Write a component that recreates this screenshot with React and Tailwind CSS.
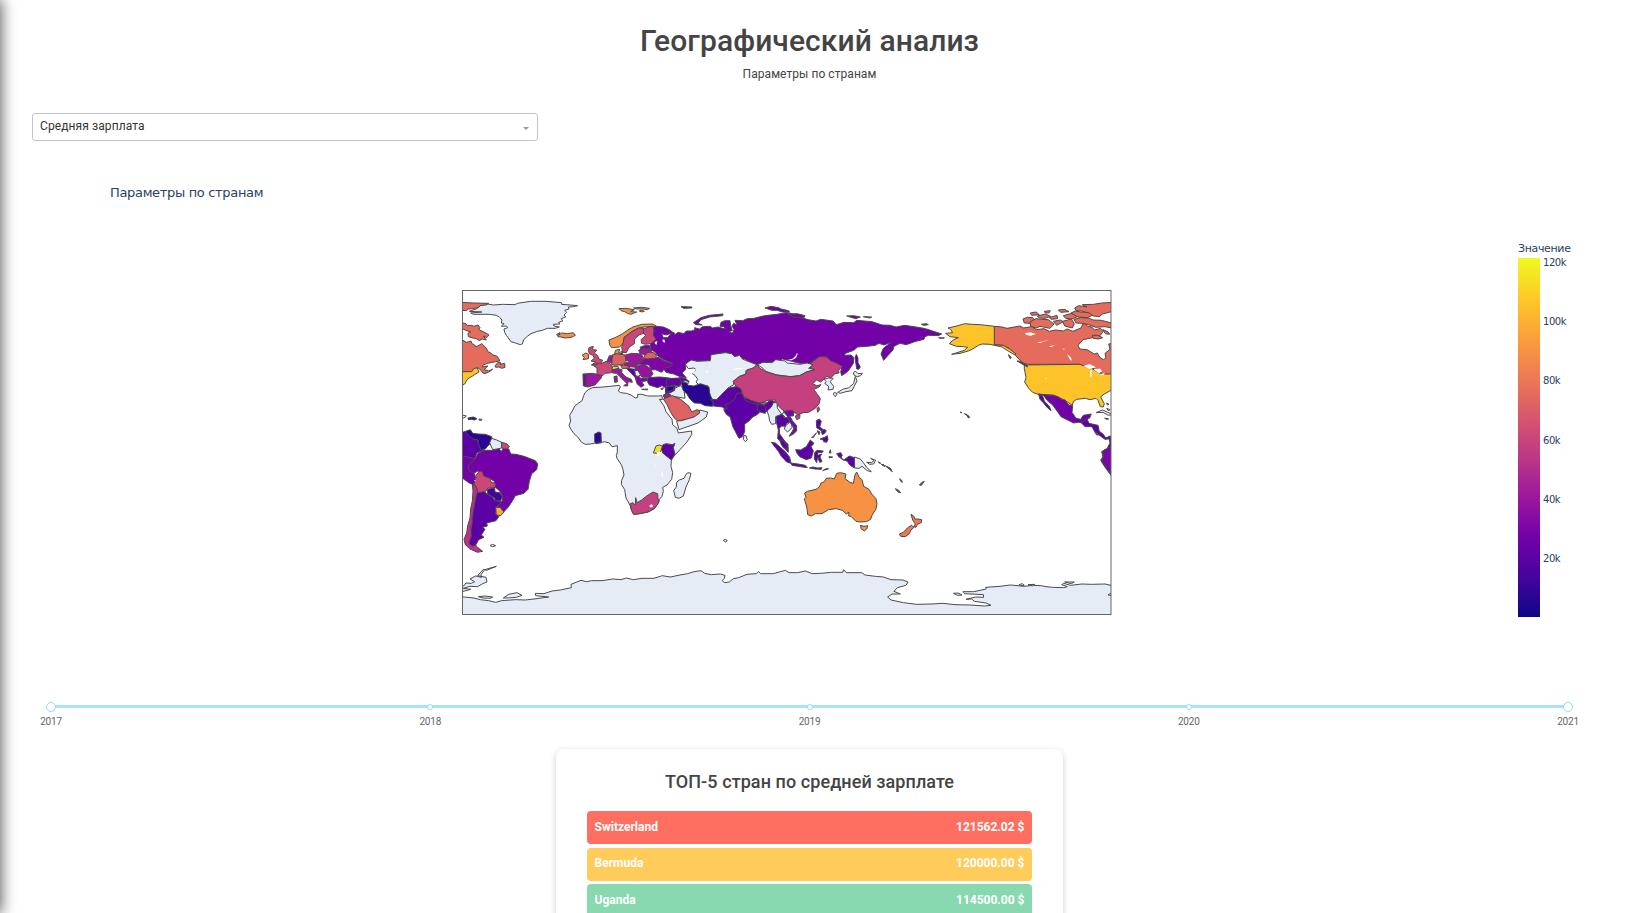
import React from "react";

const NONE = "#e5ecf6";
const RUS = "#7201a8";
const IND = "#5c01a6";
const NAVY = "#2a0593";
const CAN = "#e56b5d";
const USA = "#fdc328";
const PINK = "#c5407e";
const NOR = "#f79143";
const MAG = "#9c179e";
const ROSE = "#cc4778";

// Each layer holds [fill, outline] pairs drawn on its own local origin (x, y in thirds of a pixel).
const layers = [
  {
    at: "translate(0 0)",
    shapes: [
      [NONE, "28,79 50,71 58,65 55,60 82,57 100,60 128,58 165,59 172,55 212,49 258,49 305,53 305,58 330,60 353,62 340,65 325,66 327,72 314,76 320,82 312,90 317,96 304,101 308,108 296,112 300,117 280,118 282,123 298,126 286,130 262,130 247,136 232,139 213,146 202,154 191,164 187,177 181,179 166,174 153,170 145,159 139,151 134,142 132,132 143,128 139,123 124,124 132,116 124,114 126,105 119,97 109,91 88,88 40,88 32,84 66,81"],
      [NOR, "290,148 300,143 295,151 305,144 322,146 340,143 346,151 334,157 316,159 302,156 294,155"],
      [NOR, "477,71 497,70 523,74 512,80 530,81 513,88 502,85 494,80 483,77"],
      [NOR, "521,69 545,67 569,70 562,74 548,72 530,72"],
      [NOR, "538,78 546,75 553,79 546,81"],
      [CAN, "4,52 40,54 86,55 78,60 60,62 56,67 40,71 24,72 20,77 4,76"],
      [CAN, "4,113 18,116 22,122 35,121 42,124 54,120 60,128 56,134 72,141 87,150 80,158 70,153 79,165 67,162 58,167 49,161 36,158 25,155 24,145 32,140 20,137 4,130"],
      [CAN, "-10,165 9,166 20,172 33,168 35,175 44,180 48,186 65,176 70,180 79,190 84,200 94,205 98,210 110,213 117,222 119,228 102,231 83,235 69,240 66,246 84,243 72,254 81,256 86,258 98,252 92,258 75,266 69,264 63,256 54,248 46,252 35,260 18,260 4,262 -10,262"],
      [CAN, "105,243 114,232 122,233 120,238 134,235 135,247 126,250 116,246 107,247"],
      [USA, "-10,262 18,260 35,260 42,250 52,249 57,261 45,268 38,273 24,281 18,290 15,296 7,301 -10,310"],
      [NONE, "7,390 19,393 12,399 4,399"],
      [NAVY, "24,399 40,396 51,401 43,405 35,403 25,404"],
      [NONE, "57,402 66,403 65,406 58,406"],
      [NONE, "385,314 398,308 430,306 478,301 481,306 475,318 482,323 499,325 513,330 526,339 533,337 533,328 545,328 563,333 595,333 606,332 607,344 598,343 612,363 618,380 636,403 638,419 651,430 655,444 695,438 695,449 680,472 660,494 643,512 634,525 633,544 638,563 635,583 621,600 608,607 610,619 606,634 598,643 594,655 583,671 564,681 533,687 521,688 515,677 510,660 498,639 494,614 484,598 485,586 492,570 489,554 485,541 471,520 469,512 472,501 472,482 456,485 448,474 433,470 418,475 405,474 392,477 376,478 365,472 353,456 342,446 333,433 327,421 332,408 329,391 337,378 345,362 366,347 371,332 375,323"],
      [NAVY, "404,447 416,441 423,444 424,471 408,476 404,470"],
      ["#f0dd26", "580,504 588,483 598,480 608,484 603,497 599,505"],
      [IND, "608,480 618,476 637,479 645,475 640,488 645,507 634,525 608,504 605,493"],
      [PINK, "510,657 518,653 526,660 527,638 531,653 545,645 560,633 579,621 593,626 594,641 598,648 594,656 583,671 564,681 533,687 521,688 515,677"],
      [NONE, "693,565 688,584 678,606 670,633 657,640 646,637 641,617 649,606 650,592 658,585 672,580 678,568 684,563"],
      // Western Europe
      [ROSE, "387,188 400,184 397,194 410,195 403,204 413,212 417,222 428,226 421,236 394,240 408,231 393,228 403,220 399,211 388,206 385,196"],
      [NOR, "366,211 377,204 386,208 385,221 369,224 373,217"],
      [NOR, "447,165 465,158 485,148 502,136 519,126 545,118 579,117 590,124 576,125 553,126 534,130 515,140 504,148 492,157 490,174 479,186 455,188 449,180"],
      [ROSE, "485,187 490,171 493,157 514,141 535,129 552,130 553,144 537,150 524,162 523,176 507,187 499,203 488,202"],
      [ROSE, "556,130 565,126 579,124 582,137 580,150 588,163 575,175 557,178 545,175 543,164 558,151 551,146 550,133"],
      [NOR, "466,196 479,193 476,202 486,206 472,209 464,207"],
      [NOR, "482,200 490,200 487,207"],
      [MAG, "369,267 397,265 425,271 423,280 405,300 383,306 370,302"],
      ["#8405a7", "370,268 381,270 379,304 371,302"],
      [ROSE, "396,239 410,240 411,234 423,236 439,229 455,240 458,250 455,263 435,265 428,272 411,268 411,249"],
      ["#de6164", "455,220 456,210 471,206 495,210 498,229 489,239 463,241 455,238"],
      [MAG, "441,229 448,212 457,213 455,234"],
      ["#de6164", "482,241 508,240 509,249 487,251"],
      ["#eadb32", "455,251 460,244 474,244 476,251 461,254"],
      [MAG, "457,254 475,251 486,254 485,263 498,276 514,283 517,292 504,290 503,303 491,302 501,296 487,282 470,265 457,264"],
      [MAG, "462,275 471,273 472,291 464,292"],
      [MAG, "496,210 515,205 545,207 551,227 537,237 515,231 498,226"],
      ["#8405a7", "540,187 553,182 568,181 571,192 560,192 545,196"],
      [MAG, "536,196 547,190 574,193 574,205 556,209 540,205"],
      [MAG, "491,236 508,230 535,236 528,247 508,245 494,240"],
      ["#6300a7", "500,250 528,253 526,265 535,278 525,277 507,258"],
      ["#9613a1", "527,245 551,237 570,250 579,266 572,276 548,277 536,268 525,255"],
      [NONE, "524,256 534,256 541,269 533,277 526,269"],
      ["#8405a7", "525,276 536,273 542,280 562,279 562,287 545,290 552,301 543,307 531,296"],
      [NONE, "545,313 563,312 562,315"],
      ["#8405a7", "535,237 552,225 552,218 584,220 594,217 614,228 640,237 639,246 611,254 605,262 586,254 574,255 567,240"],
      [IND, "564,278 581,277 599,276 620,278 645,282 661,280 658,293 657,303 629,305 615,307 606,302 593,308 568,300 563,292"],
      [NONE, "602,311 611,308 606,315"],
      [NONE, "610,330 628,324 644,310 661,302 672,312 675,340 640,334 617,345"],
      [NAVY, "616,306 645,305 644,316 631,323 617,325"],
      ["#9c179e", "611,333 619,324 633,330 624,337 615,345"],
      ["#de6164", "610,342 625,336 637,332 662,343 687,364 695,381 711,374 720,377 717,393 697,400 663,406 657,411 642,398 631,380 620,357"],
      [NONE, "650,408 665,407 702,396 718,385 719,375 743,381 739,396 714,414 691,422 657,434"],
    ],
  },
  {
    at: "translate(630 0)",
    shapes: [
      [RUS, "-50,128 -42,124 -20,126 -2,134 10,143 -12,150 -25,146 -20,158 -7,158 5,143 12,142 14,149 25,142 41,146 49,138 65,138 75,134 74,128 88,132 98,125 120,124 128,129 144,126 166,132 162,125 150,124 153,112 164,107 180,107 182,122 187,137 176,140 187,145 192,134 186,123 191,115 201,120 195,106 218,107 232,101 252,100 284,92 321,88 349,83 379,90 370,96 390,96 414,104 438,108 452,103 489,108 499,119 522,112 551,113 560,106 606,110 636,120 661,121 678,126 704,121 732,125 756,129 773,133 790,139 815,147 805,152 776,151 765,155 762,163 734,170 709,179 690,175 672,184 669,195 656,209 641,226 633,207 640,190 653,180 664,172 642,180 627,175 616,181 592,184 563,186 551,196 527,205 522,211 543,210 551,217 550,235 534,259 515,272 512,260 516,246 496,233 480,227 469,215 450,215 420,235 389,235 337,222 327,230 278,232 261,239 239,231 224,222 217,222 209,211 194,215 185,206 166,203 123,209 121,227 81,229 64,225 46,238 47,254 36,264 49,278 30,275 11,267 -12,262 -20,250 3,244 8,235 -15,226 -36,214 -45,201 -57,194 -59,178 -42,163 -50,150 -48,137"],
      ["#de6164", "-77,212 -66,202 -49,202 -40,213 -46,220 -69,222 -79,220"],
      [RUS, "70,113 93,98 117,91 159,87 158,92 119,96 93,104 84,115 97,120 78,119"],
      [RUS, "285,69 303,64 326,68 333,72 356,77 359,82 337,81 321,76 306,76"],
      [RUS, "352,87 382,86 405,92 402,98 372,97"],
      [RUS, "530,93 551,92 571,96 557,101"],
      ["#333", "33,65 66,66 65,69 41,70"],
      ["#555", "580,95 605,96 599,99"],
      [IND, "559,208 564,219 564,233 571,246 566,253 560,252 558,237 555,219"],
      [NONE, "46,238 56,230 64,225 81,229 121,227 123,209 166,203 185,206 194,215 209,211 217,222 239,231 261,239 244,253 228,256 227,267 208,274 192,288 190,300 175,308 161,325 151,333 140,345 123,342 117,316 113,302 85,298 78,291 83,283 75,271 66,265 78,254 72,249 55,251"],
      ["#6500a7", "-10,282 8,280 27,279 37,292 28,303 8,300 -2,305 -10,303"],
      [NAVY, "-12,306 -2,305 13,302 10,315 -6,321"],
      [IND, "28,276 48,281 58,290 47,292 34,291"],
      [NONE, "40,286 55,289 54,297 44,294"],
      [NAVY, "34,291 49,293 55,301 71,303 92,296 117,306 119,326 130,351 128,364 105,362 91,355 73,354 59,341 51,328 39,315 36,303"],
      [IND, "121,344 140,344 153,331 162,321 175,309 204,304 219,318 208,330 203,342 194,354 188,367 181,374 167,374 157,366 130,363 130,351"],
      [IND, "165,360 181,353 194,342 200,325 215,324 225,342 254,352 282,360 302,345 314,351 306,364 295,379 286,379 278,371 269,382 261,389 248,396 237,408 224,417 224,440 217,455 207,460 200,447 188,424 181,397 169,388 161,374 172,371"],
      [IND, "225,337 240,343 273,351 273,359 245,354 227,347"],
      ["#c9b7df", "274,353 288,351 289,356 277,357"],
      [IND, "261,357 281,360 288,367 286,385 273,382 263,376"],
      [NONE, "220,452 228,452 232,464 226,470 220,463"],
      [NONE, "262,239 279,232 307,233 317,224 345,228 352,234 389,238 411,234 430,239 416,250 435,254 409,261 389,272 361,275 321,270 289,260 276,248"],
      [PINK, "261,239 270,250 286,259 319,270 362,275 389,272 409,261 435,254 419,248 429,239 420,235 441,221 447,215 470,216 481,227 499,234 517,244 506,256 507,264 495,266 482,279 471,274 452,291 440,285 428,296 440,302 453,299 446,307 431,313 443,329 451,341 448,354 437,369 416,382 400,383 383,390 375,383 361,376 345,380 333,371 325,362 312,354 316,345 294,346 270,354 242,346 221,335 212,311 198,304 189,289 208,275 227,268 233,254 252,248"],
      [PINK, "376,393 390,389 389,400 380,404"],
      [PINK, "441,371 446,365 449,374 443,382"],
      [NONE, "462,283 475,279 490,280 480,290 491,304 489,313 474,315 476,304 464,295 469,290"],
      [NONE, "550,264 556,258 564,266 577,265 572,272 562,275 553,271"],
      [NONE, "556,274 561,288 552,305 546,317 528,320 511,325 503,322 520,312 535,309 551,296"],
      [NONE, "493,322 502,326 496,335 490,328"],
      [NONE, "291,378 304,366 310,353 321,353 322,369 335,388 317,395 317,416 305,418 299,408 296,391"],
      [NONE, "337,388 342,379 353,387 365,402 366,428 353,441 343,432 346,423 360,411"],
      [IND, "318,395 337,388 343,398 356,398 362,408 349,416 346,424 335,423 328,430 329,447 344,468 354,478 355,502 344,490 333,472 323,461 325,435 319,410"],
      ["#700aa5", "341,380 363,375 372,380 370,393 359,393 366,406 380,422 380,438 369,448 357,454 367,439 372,429 362,415 354,396"],
      [IND, "439,407 448,402 454,409 449,426 458,432 455,438 440,428"],
      [IND, "442,437 450,441 447,449"],
      [IND, "454,439 462,433 469,437 464,445 457,449"],
      [IND, "450,462 464,457 472,452 474,464 470,472 461,470 459,464"],
      [IND, "425,458 440,443 429,458"],
    ],
  },
  {
    at: "translate(630 465)",
    shapes: [
      [IND, "304,7 316,9 330,21 346,35 359,52 363,70 350,66 334,49 326,35 315,21"],
      [IND, "362,69 384,72 406,76 412,83 391,80 366,76"],
      [IND, "330,-2 341,3 352,18 353,29 340,23 333,12"],
      [IND, "377,29 392,30 409,20 421,0 432,10 423,20 430,33 424,54 409,59 389,50 381,40"],
      [IND, "434,38 441,31 460,33 457,37 442,39 444,46 455,42 450,51 456,65 449,67 443,51 440,68 433,57"],
      [IND, "418,84 429,81 442,84 456,83 454,88 434,87"],
      [IND, "458,92 468,86 476,86"],
      [IND, "481,29 483,39 478,39"],
      [IND, "477,50 488,51 478,54"],
      [IND, "500,41 512,38 517,46 513,51 520,61 538,48 553,53 553,84 539,75 532,64 517,58 507,51"],
      [NONE, "553,51 571,57 580,68 590,82 604,95 592,92 576,79 567,85 554,84"],
      [NONE, "590,67 604,68 612,62 602,55 617,61 611,72 599,73"],
      ["#555", "625,65 632,69 630,71"],
      ["#555", "638,74 646,78 643,80"],
      ["#555", "650,80 664,89 660,88"],
      [NOR, "404,159 412,154 438,148 448,141 453,129 463,125 469,115 482,114 493,117 500,100 512,98 528,102 525,116 540,127 550,130 555,104 560,96 568,113 576,119 581,139 597,148 605,162 618,176 621,191 618,207 606,226 602,238 590,245 570,246 558,244 543,229 536,228 537,217 529,222 517,211 499,206 475,209 456,221 436,221 424,228 413,224 411,204 403,177 408,172"],
      [NOR, "571,256 582,259 593,257 591,266 583,273 574,267"],
      [NONE, "160,301 166,298 172,302 167,306"],
      [NONE, "-660,461 -642,460 -598,448 -620,445 -600,439 -577,440 -562,431 -549,426 -552,412 -577,407 -560,388 -550,391 -521,379 -556,389 -567,404 -566,412 -583,408 -600,417 -586,425 -596,430 -612,429 -619,438 -660,441"],
      [NONE, "-660,468 -617,471 -588,474 -569,479 -544,482 -523,487 -505,482 -464,479 -434,480 -408,477 -364,471 -403,467 -404,460 -378,461 -354,453 -329,450 -296,443 -297,433 -267,421 -250,425 -235,422 -204,422 -171,417 -147,419 -131,414 -110,419 -84,415 -48,415 -23,407 1,411 30,405 53,401 72,395 93,392 104,400 124,404 151,402 165,406 163,415 157,422 163,428 178,426 190,416 206,413 231,403 259,401 266,395 272,401 310,401 346,391 357,398 383,398 406,393 427,401 452,400 485,397 518,397 521,389 529,398 575,398 585,405 616,409 640,411 663,419 699,420 714,426 708,436 682,443 672,454 691,462 666,462 653,471 663,480 700,488 740,493 786,492 819,490 855,494 900,495 943,498 963,496 948,489 913,484 905,477 888,478 917,471 941,472 940,464 884,461 879,455 911,455 949,447 947,442 990,439 1021,435 1064,439 1087,436 1113,437 1128,440 1148,442 1181,443 1192,440 1175,434 1181,430 1202,436 1236,432 1265,433 1305,432 1340,440 1340,530 -660,530"],
      [NONE, "-500,474 -484,463 -459,458 -444,466 -461,472 -485,474"],
      [NONE, "-575,470 -555,468 -532,471 -540,475 -560,474"],
      [NONE, "850,460 864,459 876,465 862,466"],
      [NONE, "1047,434 1057,431 1063,436 1052,437"],
      [NONE, "1074,434 1094,433 1087,438"],
      [NONE, "1184,426 1213,426 1204,431"],
    ],
  },
  {
    at: "translate(0 465)",
    shapes: [
      [NONE, "90,317 98,313 107,317 98,320"],
      ["#b83289", "37,134 48,137 53,157 52,180 49,240 40,300 50,320 68,334 52,337 30,327 16,314 12,298 20,279 23,258 30,234 32,207 37,183 39,153"],
      [RUS, "26,92 25,73 43,59 55,40 71,31 98,31 115,25 124,34 135,20 147,28 152,42 168,43 192,49 226,62 233,72 230,89 215,101 208,124 204,148 192,160 166,167 157,183 145,201 129,218 111,202 127,184 128,168 119,153 104,140 103,124 88,115 68,108 53,93 37,103"],
      [IND, "52,157 73,155 82,163 97,171 104,181 117,184 127,184 109,202 113,212 105,219 117,229 108,242 80,249 82,258 68,262 75,268 64,285 72,292 56,299 48,314 37,319 27,310 31,298 34,288 33,270 37,247 39,221 44,193 48,172"],
      [IND, "-10,-28 10,-24 28,-29 36,-20 49,-3 66,13 71,31 51,39 43,59 24,72 26,91 -10,88"],
      [RUS, "-10,50 12,49 40,54 43,61 25,75 26,91 44,102 48,121 42,135 26,128 11,117 -10,110"],
      [NAVY, "16,-25 31,-31 38,-20 55,-18 76,-17 95,-10 98,5 84,17 76,27 63,30 56,13 54,0 39,-3 28,-11"],
      [NONE, "95,-5 110,0 125,7 125,24 111,27 98,29 89,8"],
      [ROSE, "124,7 140,11 148,20 138,28 125,24"],
      [ROSE, "49,105 59,93 67,95 71,108 90,115 92,125 107,131 105,143 84,144 77,154 55,158 50,143 42,131"],
      ["#41049d", "82,148 104,143 105,156 119,158 127,169 122,183 104,182 105,175 83,162"],
      ["#fba637", "107,202 120,202 132,216 122,227 109,225"],
    ],
  },
  {
    at: "translate(1260 0)",
    shapes: [
      [CAN, "343,124 366,126 381,130 420,123 431,129 455,125 469,134 492,131 508,139 526,135 550,138 561,132 579,139 603,129 611,113 622,123 635,126 644,135 662,130 670,138 661,151 637,158 609,164 594,181 599,192 621,194 643,207 652,204 659,217 671,224 678,219 675,205 690,193 686,177 700,174 700,270 666,270 660,259 636,249 632,244 612,244 600,238 443,238 429,235 406,211 388,190 370,181 343,179"],
      [CAN, "429,102 442,97 458,98 464,106 449,115 433,114"],
      [CAN, "450,111 468,101 485,103 505,104 522,117 510,130 480,124 469,129 452,124"],
      [CAN, "451,84 468,81 478,89 455,91"],
      [CAN, "472,93 496,87 512,94 495,100 478,99"],
      [CAN, "493,79 511,77 507,84 496,84"],
      [CAN, "508,98 531,91 533,101 514,103"],
      [CAN, "535,75 554,73 567,80 542,82"],
      [CAN, "550,92 576,85 594,94 576,102 557,100"],
      [CAN, "520,109 541,105 550,110 530,121"],
      [CAN, "548,109 574,102 583,116 577,129 554,123"],
      [CAN, "582,103 601,98 624,99 640,105 664,106 687,112 700,114 700,130 675,125 647,127 626,119 605,115 588,114"],
      [CAN, "573,84 586,78 605,82 624,81 640,89 623,98 594,96"],
      [CAN, "584,69 596,62 621,66 607,59 640,58 665,54 700,52 700,78 680,84 666,87 659,95 640,93 628,84 603,78 588,77"],
      [CAN, "637,151 653,151 668,158 656,162 639,160"],
      [CAN, "669,134 685,141 689,148 676,146"],
      [USA, "197,145 218,143 212,133 204,129 231,123 254,116 276,118 301,119 343,124 343,180 370,181 389,192 408,207 405,210 386,199 366,186 330,178 307,177 295,181 278,192 265,198 240,205 215,208 231,203 253,196 263,187 250,185 229,184 208,176 220,165 235,158 210,155"],
      [USA, "433,240 600,238 617,245 635,250 662,267 700,267 700,313 689,318 668,330 662,336 673,356 670,366 661,365 654,346 648,340 630,344 616,340 590,343 580,350 577,361 562,351 551,344 538,338 520,330 477,329 458,322 447,311 434,291 438,277 433,251"],
      [RUS, "475,327 503,330 522,332 534,335 546,344 555,345 566,360 578,362 576,382 588,400 602,403 610,391 634,387 629,399 618,405 613,415 595,412 581,414 543,395 534,382 518,360 501,346 492,332"],
      [IND, "476,328 488,333 493,348 509,366 513,377 503,369 490,353 480,343"],
      [IND, "604,413 621,402 627,415 654,421 658,439 670,448 677,458 693,454 697,461 675,463 658,451 645,442 636,425 615,425"],
      ["#ad2793", "643,438 658,449 650,450"],
      [IND, "686,454 700,454 700,580 681,555 668,536 662,525 669,516 665,500 682,490 690,474"],
      ["#7c04a8", "668,498 700,482 700,576 682,550 666,529 671,511"],
      [NONE, "648,383 668,375 695,387 700,391 683,390 669,382"],
      ["#555", "674,399 686,402 678,403"],
      [NONE, "680,354 687,358 682,360"],
      [NONE, "680,370 690,374 686,378"],
      ["#444", "241,381 246,383 243,384"],
      ["#444", "253,386 263,390 269,397 265,399 261,391"],
      ["#444", "385,209 394,217 391,221"],
      ["#444", "411,228 421,229 439,239 443,246 430,239"],
      ["#444", "124,118 139,116 145,119 132,121"],
      ["#444", "176,158 193,159 180,160"],
    ],
  },
  {
    at: "translate(1260 465)",
    shapes: [
      ["#ed7953", "93,223 101,228 105,237 114,237 125,239 124,248 113,252 108,262 101,260 106,252 98,240"],
      ["#ed7953", "94,256 102,262 93,270 88,281 76,290 62,289 58,282 70,277 82,264"],
      ["#555", "46,146 55,150 62,158 54,156"],
      ["#555", "59,116 65,121 67,127 62,124"],
      ["#555", "118,135 126,127 133,124 124,136"],
      ["#555", "4,73 12,75 9,77"],
      ["#555", "17,78 30,84 37,95 28,88"],
      [NONE, "684,465 690,461 700,462 700,468"],
    ],
  },
];

const lakes = [
  "982,225 998,221 1008,211 1011,203 1013,207 1008,219 995,226",
  "817,255 829,250 858,250 822,255",
  "738,256 745,257 743,264 739,262",
  "688,256 708,252 699,266 693,259 691,274 698,284 688,287",
  "1694,145 1711,142 1728,147 1712,152 1700,150",
  "1731,172 1745,170 1772,163 1750,170 1739,174",
  "1766,184 1784,181 1774,186",
  "1821,207 1832,216 1836,227 1843,230 1830,224",
  "1810,190 1814,192 1811,196",
  "1870,243 1889,237 1908,247 1889,252",
  "1890,257 1895,255 1896,272 1890,276",
  "1901,252 1921,251 1926,259 1917,265 1908,259",
  "1917,270 1935,263 1931,270",
  "1755,279 1761,280 1758,282",
  "584,171 592,168 590,179 585,177",
  "607,164 613,163 616,173 609,171",
  "590,502 603,500 604,509 592,512",
  "580,523 583,536 588,549 582,541",
  "605,557 609,566 608,581 604,568",
  "44,584 48,589 43,588",
  "568,662 574,658 580,662 576,667 570,667",
];

function WorldMap() {
  return (
    <svg className="block h-[326px] w-[651px]" viewBox="461 289 651 326">
      <defs>
        <clipPath id="frame">
          <rect x="462.5" y="290" width="648.5" height="324.3" />
        </clipPath>
      </defs>
      <g clipPath="url(#frame)">
        <g transform="translate(460 285) scale(0.33333)">
          {layers.map((layer) => (
            <g key={layer.at} transform={layer.at} stroke="#4a4a4a" strokeWidth="3" strokeLinejoin="round">
              {layer.shapes.map(([fill, points]) => (
                <polygon key={points} points={points} fill={fill} />
              ))}
            </g>
          ))}
          {lakes.map((points) => (
            <polygon key={points} points={points} fill="#fff" />
          ))}
        </g>
      </g>
      <rect x="462.5" y="290.5" width="648.5" height="324" fill="none" stroke="#666" />
    </svg>
  );
}

const years = ["2017", "2018", "2019", "2020", "2021"];
const ticks = ["120k", "100k", "80k", "60k", "40k", "20k"];
const top = [
  ["Switzerland", "121562.02 $", "bg-[#ff6f61]"],
  ["Bermuda", "120000.00 $", "bg-[#ffcc5c]"],
  ["Uganda", "114500.00 $", "bg-[#88d8b0]"],
];

export default function App() {
  return (
    <div className="relative h-[913px] overflow-hidden bg-white font-['Roboto',sans-serif] text-[#444]">
      <div className="absolute top-0 -left-10 h-full w-10 shadow-[0_0_15px_1px_rgba(0,0,0,0.65)]" />
      <header className="flex h-[113px] flex-col items-center pr-[15px] pt-[23px]">
        <h1 className="text-[30px] leading-9 font-medium tracking-[0.08px]">Географический анализ</h1>
        <p className="mt-[6px] text-[12px] leading-[18px] tracking-[0.05px]">Параметры по странам</p>
      </header>

      <div className="ml-8 flex h-7 w-[506px] items-center justify-between rounded-[3px] border border-[#c4c4c4] pr-[8px] pl-[7px] text-[12px] text-[#333]">
        <span className="-mt-[3px] tracking-[0.1px]">Средняя зарплата</span>
        <span className="mt-[3px] border-x-[3px] border-t-[3px] border-x-transparent border-t-[#999]" />
      </div>

      <section className="flex h-[554px] flex-col font-['DejaVu_Sans',sans-serif] text-[#2a3f5f]">
        <h2 className="mt-[43px] ml-[110px] text-[13px] leading-[18px] tracking-[-0.33px]">Параметры по странам</h2>
        <div className="mt-[40px] flex">
          <div className="mt-[47px] ml-[461px]">
            <WorldMap />
          </div>
          <div className="ml-[406px] flex flex-col">
            <div className="h-[16px] text-[11px] leading-[14px] tracking-[-0.35px]">Значение</div>
            <div className="flex">
              <div className="h-[359px] w-[22px] bg-[linear-gradient(to_top,#0d0887_0%,#46039f_11.1%,#7201a8_22.2%,#9c179e_33.3%,#bd3786_44.4%,#d8576b_55.5%,#ed7953_66.6%,#fb9f3a_77.7%,#fdca26_88.8%,#f0f921_100%)]" />
              <div className="-mt-px ml-[3px] flex h-[308px] flex-col justify-between text-[10px] leading-[12px] tracking-[-0.45px]">
                {ticks.map((tick) => (
                  <span key={tick}>{tick}</span>
                ))}
              </div>
            </div>
          </div>
        </div>
      </section>

      <div className="relative mr-[66px] ml-[51px] h-[54px] pt-[7px]">
        <div className="absolute top-[10px] right-0 left-0 h-[3px] bg-[#abe2fb]" />
        <div className="relative flex justify-between">
          {years.map((year, i) => (
            <div key={year} className="flex w-0 flex-col items-center">
              <span className="flex h-[10px] items-center">
                <span
                  className={
                    i === 0 || i === 4
                      ? "block size-[10px] shrink-0 rounded-full border border-[#96dbfa] bg-white"
                      : "block size-[6px] shrink-0 rounded-full border border-[#96dbfa] bg-white"
                  }
                />
              </span>
              <span className="mt-[4px] text-[10px] leading-[12px] tracking-[-0.2px] text-[#666]">{year}</span>
            </div>
          ))}
        </div>
      </div>

      <section className="ml-[556px] h-[220px] w-[507px] rounded-lg bg-white px-[31px] pt-[20px] shadow-[0_2px_6px_rgba(0,0,0,0.2)]">
        <h3 className="text-center text-[18px] leading-[26px] font-medium tracking-[0.08px]">ТОП-5 стран по средней зарплате</h3>
        <ul className="mt-[16px] flex flex-col gap-[3.6px]">
          {top.map(([name, value, color]) => (
            <li
              key={name}
              className={`${color} flex h-[33px] items-center justify-between rounded px-[7.5px] pb-[2px] text-[12px] font-bold text-white`}
            >
              <span>{name}</span>
              <span>{value}</span>
            </li>
          ))}
        </ul>
      </section>
    </div>
  );
}
